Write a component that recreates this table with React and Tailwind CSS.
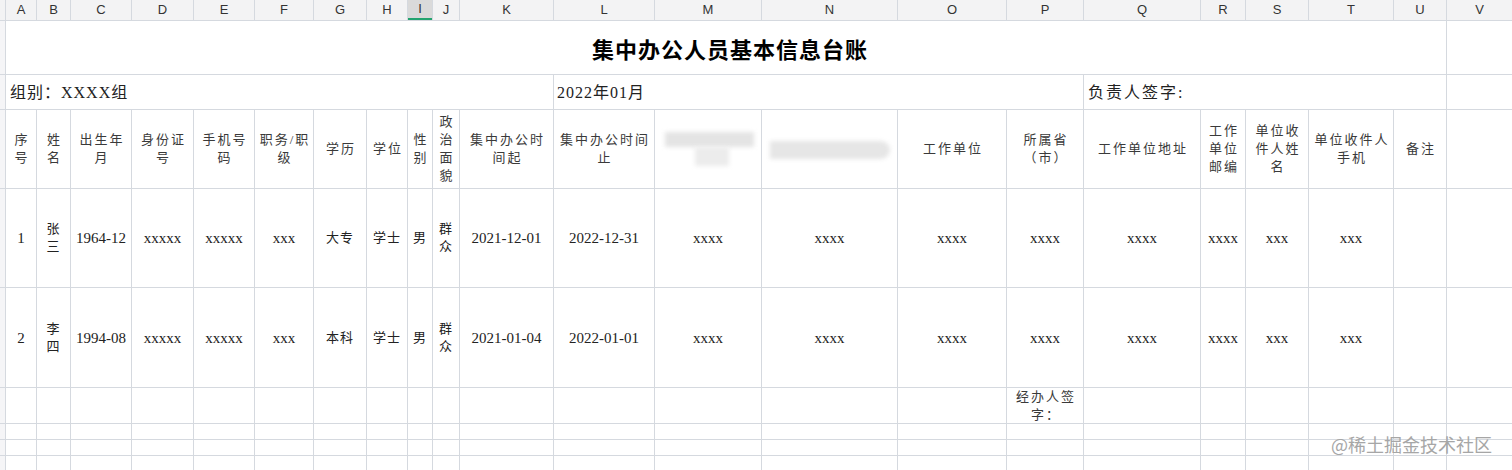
import React from 'react';

/* ─── Sheet layout ───────────────────────────────────────── */
const LETTERS = ['A','B','C','D','E','F','G','H','I','J','K','L','M','N','O','P','Q','R','S','T','U','V'];

// header row 3, one entry per column, each entry = lines of text
const HEAD = [
    ['序', '号'], ['姓', '名'], ['出生年', '月'], ['身份证', '号'], ['手机号', '码'],
    ['职务/职', '级'], ['学历'], ['学位'], ['性', '别'], ['政', '治', '面', '貌'],
    ['集中办公时', '间起'], ['集中办公时间', '止'], 'blurM', 'blurN', ['工作单位'],
    ['所属省', '（市）'], ['工作单位地址'], ['工作', '单位', '邮编'], ['单位收', '件人姓', '名'],
    ['单位收件人', '手机'], ['备注'], [],
];

const ROWS = [
    [['1'], ['张', '三'], ['1964-12'], ['xxxxx'], ['xxxxx'], ['xxx'], ['大专'], ['学士'], ['男'], ['群', '众'],
     ['2021-12-01'], ['2022-12-31'], ['xxxx'], ['xxxx'], ['xxxx'], ['xxxx'], ['xxxx'], ['xxxx'], ['xxx'], ['xxx'], [], []],
    [['2'], ['李', '四'], ['1994-08'], ['xxxxx'], ['xxxxx'], ['xxx'], ['本科'], ['学士'], ['男'], ['群', '众'],
     ['2021-01-04'], ['2022-01-01'], ['xxxx'], ['xxxx'], ['xxxx'], ['xxxx'], ['xxxx'], ['xxxx'], ['xxx'], ['xxx'], [], []],
];

const serif = "font-['Liberation_Serif','Noto_Sans_CJK_SC',serif]";

const Gutter = () => <div className="bg-[#f5f5f7]" />;

const Lines = ({ lines, className }) => (
    <div className={`bg-white flex flex-col items-center justify-center text-center ${className}`}>
        {lines.map((l, i) => <span key={i} className="whitespace-nowrap">{l}</span>)}
    </div>
);

const BlurM = () => (
    <div className="bg-white flex flex-col items-center justify-center pl-[2px]">
        <div className="w-[89px] h-[15px] bg-[#e4e4e4] blur-[2px]" />
        <div className="w-[34px] h-[19px] bg-[#ececec] blur-[2px] ml-[5px]" />
    </div>
);

const BlurN = () => (
    <div className="bg-white flex items-center justify-center pt-[2px]">
        <div className="w-[120px] h-[18px] rounded-r-full bg-[#e6e6e6] blur-[2px]" />
    </div>
);

export default function App() {
    return (
        <div className={`relative w-[1512px] h-[470px] overflow-hidden bg-white ${serif}`}>
            <div className="grid gap-px bg-[#d5d9df] grid-cols-[5px_30px_33px_60px_61px_60px_58px_52px_40px_24px_26px_93px_100px_106px_135px_108px_76px_116px_44px_62px_84px_52px_1fr] grid-rows-[20px_53px_34px_78px_98px_99px_35px_15px_15px_15px_15px_15px]">

                {/* ── column letters ── */}
                <div className="bg-[#f3f3f4]" />
                {LETTERS.map(l => (
                    <div
                        key={l}
                        className={`flex items-center justify-center font-['Liberation_Sans',sans-serif] text-[13px] text-[#333] ${
                            l === 'I' ? 'bg-[#dadada] border-b-2 border-[#23a36f] text-[#1f8f5f]' : 'bg-[#f3f3f4]'
                        }`}
                    >
                        {l}
                    </div>
                ))}

                {/* ── title ── */}
                <Gutter />
                <div className="col-span-21 bg-white flex items-center justify-center pl-[8px] pt-[2px]">
                    <span className="font-['Noto_Sans_CJK_SC',sans-serif] font-bold text-[22px] tracking-[1px] text-black">
                        集中办公人员基本信息台账
                    </span>
                </div>
                <div className="bg-white" />

                {/* ── group / month / signature ── */}
                <Gutter />
                <div className="col-span-11 bg-white flex items-center pl-[4px] pt-[2px] text-[16px] text-[#222] tracking-[1px]">
                    组别：XXXX组
                </div>
                <div className="col-span-5 bg-white flex items-center pl-[3px] pt-[2px] text-[16px] text-[#222] tracking-[1px]">
                    2022年01月
                </div>
                <div className="col-span-5 bg-white flex items-center pl-[4px] pt-[2px] text-[16px] text-[#222] tracking-[2px]">
                    负责人签字:
                </div>
                <div className="bg-white" />

                {/* ── table header ── */}
                <Gutter />
                {HEAD.map((h, i) =>
                    h === 'blurM' ? <BlurM key={i} /> :
                    h === 'blurN' ? <BlurN key={i} /> :
                    <Lines key={i} lines={h} className="text-[13px] leading-[18px] tracking-[2px] text-[#3a3a3a] pl-[2px]" />
                )}

                {/* ── data rows ── */}
                {ROWS.map((row, r) => (
                    <React.Fragment key={r}>
                        <Gutter />
                        {row.map((c, i) => (
                            <Lines
                                key={i}
                                lines={c}
                                className={`${/^[0-9x]/.test(c[0] || '') ? 'text-[15px]' : 'text-[13px] tracking-[1px]'} leading-[18px] text-[#222]`}
                            />
                        ))}
                    </React.Fragment>
                ))}

                {/* ── handler signature row ── */}
                <Gutter />
                {LETTERS.map(l =>
                    l === 'P' ? (
                        <Lines key={l} lines={['经办人签', '字：']} className="text-[13px] leading-[18px] tracking-[2px] text-[#3a3a3a] pl-[2px]" />
                    ) : (
                        <div key={l} className="bg-white" />
                    )
                )}

                {/* ── empty rows ── */}
                {[0, 1, 2, 3].map(r => (
                    <React.Fragment key={r}>
                        <Gutter />
                        {LETTERS.map(l => <div key={l} className="bg-white" />)}
                    </React.Fragment>
                ))}
            </div>

            {/* watermark */}
            <div className="absolute left-[1331px] top-[431px] font-['Noto_Sans_CJK_SC',sans-serif] text-[18px] text-[#a6a6a6] whitespace-nowrap">
                @稀土掘金技术社区
            </div>
        </div>
    );
}
